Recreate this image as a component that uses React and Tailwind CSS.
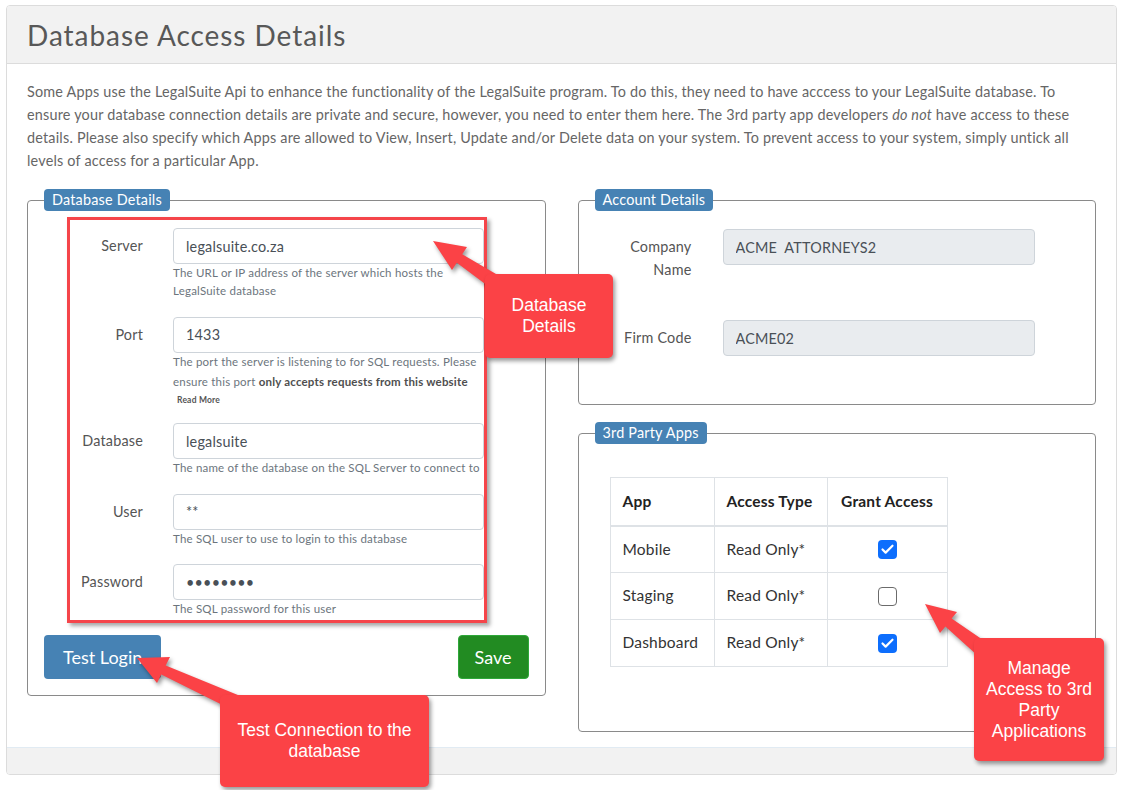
import React from 'react';
import { Check } from 'lucide-react';

const Help = ({ children }) => (
  <div className="text-[11.5px] leading-[18.4px] tracking-[0.2px] text-[#6c757d]">{children}</div>
);

const Field = ({ label, value, type = 'text', help, labelW = 'w-[73px]', gap = 'gap-[30px]', grey = false, inputW = 'flex-1' }) => (
  <div className={`flex ${gap}`}>
    <label className={`${labelW} shrink-0 text-right pt-[6px] leading-[23px] text-[14.4px] tracking-[0.2px] text-[#555]`}>{label}</label>
    <div className={`${inputW} min-w-0`}>
      <input
        readOnly
        type={type}
        value={value}
        className={`block w-full h-[36px] px-3 border border-[#ced4da] rounded-[4px] text-[14.4px] tracking-[0.2px] text-[#495057] outline-none ${grey ? 'bg-[#e9ecef]' : 'bg-white'}`}
      />
      {help}
    </div>
  </div>
);

const Legend = ({ children }) => (
  <legend className="px-2 h-[22px] leading-[22px] rounded-[4px] bg-[#4682b4] text-white text-[14.4px] tracking-[0.2px]">{children}</legend>
);

const Box = ({ checked }) =>
  checked ? (
    <span className="inline-flex items-center justify-center w-[19px] h-[19px] rounded-[4px] bg-[#0d6efd]">
      <Check size={15} strokeWidth={3.5} className="text-white" />
    </span>
  ) : (
    <span className="inline-block w-[19px] h-[19px] rounded-[4px] border-[1.5px] border-[#6b6b6b] bg-white" />
  );

const apps = [
  { name: 'Mobile', type: 'Read Only*', on: true },
  { name: 'Staging', type: 'Read Only*', on: false },
  { name: 'Dashboard', type: 'Read Only*', on: true },
];

const arrows = [
  '433,241 467,247 462.2,254.3 505.4,279.4 496.6,292.6 456.8,262.7 452,270',
  '137,658 170,657 165.7,665.5 239.7,695.7 233.1,710.3 161.3,674.5 157,683',
  '925,604 957,612 951.6,618.6 988.9,644.1 978.9,656.7 945.4,626.4 940,633',
];

const App = () => {
  return (
    <div className="relative w-[1125px] h-[790px] overflow-hidden bg-white font-['Lato',sans-serif]">
      <div className="ml-[6px] mt-[5px] w-[1111px] border border-[#dcdcdc] rounded-[4px] overflow-hidden">
        <div className="h-[58px] flex items-center px-5 bg-[#f2f2f2] border-b border-[#dcdcdc]">
          <h1 className="text-[28px] tracking-[0.95px] text-[#585858] font-normal">Database Access Details</h1>
        </div>

        <div className="px-5 pt-4 pb-[15px] bg-white">
          <p className="pr-5 text-[14.4px] leading-[23px] tracking-[0.2px] text-[#666]">
            Some Apps use the LegalSuite Api to enhance the functionality of the LegalSuite program. To do this, they need to have acccess to your LegalSuite database. To ensure your database connection details are private and secure, however, you need to enter them here. The 3rd party app developers <em>do not</em> have access to these details. Please also specify which Apps are allowed to View, Insert, Update and/or Delete data on your system. To prevent access to your system, simply untick all levels of access for a particular App.
          </p>

          <div className="grid grid-cols-2 gap-8 mt-[17px] items-start">
            <fieldset className="border border-[#8a8a8a] rounded-[4px] px-4 pt-[6px] pb-4">
              <Legend>Database Details</Legend>
              <div className="ml-[23px] w-[420px] border-[3px] border-[#f5454a] shadow-[3px_3px_4px_rgba(0,0,0,0.35)] pt-[8px] pb-[2px] flex flex-col gap-4">
                <Field
                  label="Server"
                  value="legalsuite.co.za"
                  help={<Help>The URL or IP address of the server which hosts the LegalSuite database</Help>}
                />
                <Field
                  label="Port"
                  value="1433"
                  help={
                    <div className="text-[11.5px] tracking-[0.2px] text-[#6c757d]">
                      <div className="leading-[18.4px]">The port the server is listening to for SQL requests. Please</div>
                      <div className="leading-[22px]">
                        ensure this port <strong className="text-[#4f4f4f] font-bold">only accepts requests from this website</strong>
                      </div>
                      <div className="leading-[14px] text-[8.5px] font-bold text-[#555] pl-[4px]">Read More</div>
                    </div>
                  }
                />
                <Field
                  label="Database"
                  value="legalsuite"
                  help={<Help>The name of the database on the SQL Server to connect to</Help>}
                />
                <Field label="User" value="**" help={<Help>The SQL user to use to login to this database</Help>} />
                <Field
                  label="Password"
                  type="password"
                  value="abcdefgh"
                  help={<Help>The SQL password for this user</Help>}
                />
              </div>
              <div className="flex justify-between mt-3">
                <button className="h-[44px] px-[19px] rounded-[4px] bg-[#4682b4] text-white text-[18px]">Test Login</button>
                <button className="h-[44px] px-[16px] rounded-[4px] bg-[#228b22] border border-[#2fa83a] text-white text-[18px]">Save</button>
              </div>
            </fieldset>

            <div className="flex flex-col">
              <fieldset className="border border-[#8a8a8a] rounded-[4px] px-4 pt-[18px] pb-[48px]">
                <Legend>Account Details</Legend>
                <Field label="Company Name" value="ACME  ATTORNEYS2" labelW="w-[97px]" gap="gap-[31px]" inputW="w-[312px]" grey />
                <div className="mt-[39px]">
                  <Field label="Firm Code" value="ACME02" labelW="w-[97px]" gap="gap-[31px]" inputW="w-[312px]" grey />
                </div>
              </fieldset>

              <fieldset className="mt-[17px] border border-[#8a8a8a] rounded-[4px] px-4 pt-[33px] pb-[64px]">
                <Legend>3rd Party Apps</Legend>
                <table className="ml-[15px] w-[337px] table-fixed border-collapse text-[15.5px] tracking-[0.2px] text-[#333] whitespace-nowrap">
                  <colgroup>
                    <col className="w-[104px]" />
                    <col className="w-[113px]" />
                    <col className="w-[120px]" />
                  </colgroup>
                  <thead>
                    <tr className="h-[48px] border-b-2 border-[#dee2e6]">
                      <th className="px-3 text-left font-bold text-[#222] border border-[#dee2e6]">App</th>
                      <th className="px-3 text-left font-bold text-[#222] border border-[#dee2e6]">Access Type</th>
                      <th className="px-2 text-center font-bold text-[#222] border border-[#dee2e6]">Grant Access</th>
                    </tr>
                  </thead>
                  <tbody>
                    {apps.map((a) => (
                      <tr key={a.name} className="h-[47px]">
                        <td className="px-3 border border-[#dee2e6]">{a.name}</td>
                        <td className="px-3 border border-[#dee2e6]">{a.type}</td>
                        <td className="px-3 border border-[#dee2e6] text-center">
                          <div className="flex justify-center">
                            <Box checked={a.on} />
                          </div>
                        </td>
                      </tr>
                    ))}
                  </tbody>
                </table>
              </fieldset>
            </div>
          </div>
        </div>

        <div className="h-[27px] bg-[#f2f2f2] border-t border-[#e1ebf3]" />
      </div>

      {/* annotation arrows */}
      <svg className="absolute left-0 top-0 pointer-events-none drop-shadow-[2px_3px_2px_rgba(0,0,0,0.4)]" width="1125" height="790">
        {arrows.map((p) => (
          <polygon key={p} points={p} fill="#fb4246" />
        ))}
      </svg>

      {/* annotation callouts */}
      <div className="absolute left-[485px] top-[274px] w-[128px] h-[84px] flex items-center justify-center text-center rounded-[5px] bg-[#fb4246] shadow-[2px_3px_4px_rgba(0,0,0,0.4)] text-white text-[17.5px] leading-[21px] font-['Liberation_Sans',Arial,sans-serif]">
        Database<br />Details
      </div>
      <div className="absolute left-[220px] top-[695px] w-[209px] h-[92px] flex items-center justify-center text-center rounded-[5px] bg-[#fb4246] shadow-[2px_3px_4px_rgba(0,0,0,0.4)] text-white text-[17.5px] leading-[21px] font-['Liberation_Sans',Arial,sans-serif]">
        Test Connection to the<br />database
      </div>
      <div className="absolute left-[974px] top-[638px] w-[130px] h-[123px] flex items-center justify-center text-center rounded-[5px] bg-[#fb4246] shadow-[2px_3px_4px_rgba(0,0,0,0.4)] text-white text-[17.5px] leading-[21px] font-['Liberation_Sans',Arial,sans-serif]">
        Manage<br />Access to 3rd<br />Party<br />Applications
      </div>
    </div>
  );
};

export default App;
